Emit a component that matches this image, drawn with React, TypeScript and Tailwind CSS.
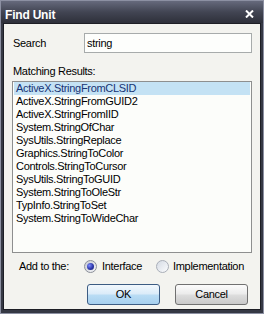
const results = [
  'ActiveX.StringFromCLSID',
  'ActiveX.StringFromGUID2',
  'ActiveX.StringFromIID',
  'System.StringOfChar',
  'SysUtils.StringReplace',
  'Graphics.StringToColor',
  'Controls.StringToCursor',
  'SysUtils.StringToGUID',
  'System.StringToOleStr',
  'TypInfo.StringToSet',
  'System.StringToWideChar',
];

function Radio({ checked }: { checked: boolean }) {
  return (
    <span
      className={`flex h-[13px] w-[13px] items-center justify-center rounded-full border ${
        checked
          ? 'border-[#8b8f99] bg-gradient-to-br from-[#c9ccd4] to-[#f4f5f8]'
          : 'border-[#a9aeb8] bg-gradient-to-br from-[#d5dbe4] to-[#fbfcfd]'
      }`}
    >
      {checked && (
        <span className="h-[7px] w-[7px] rounded-full bg-[radial-gradient(circle_at_35%_35%,#7d8bff_0%,#2c36a8_55%,#1a2070_100%)]" />
      )}
    </span>
  );
}

export default function App() {
  return (
    <div
      className="flex h-[314px] w-[264px] flex-col border border-[#8c90a2] bg-[#353844] text-[11px] leading-[13px] tracking-[-0.3px] text-black"
      style={{ fontFamily: '"Liberation Sans", Arial, sans-serif' }}
    >
      {/* Title bar */}
      <div className="flex h-[22px] shrink-0 items-start justify-between bg-gradient-to-b from-[#666a7c] via-[#424553] to-[#2e303a] pl-[4px] pr-[9px] pt-[7px]">
        <span className="text-[12px] font-bold leading-[14px] tracking-[-0.2px] text-white">Find Unit</span>
        <svg width="9" height="8" viewBox="0 0 9 8" className="mt-[2px]">
          <path d="M1 0.5 L8 7.5 M8 0.5 L1 7.5" stroke="#ffffff" strokeWidth="2" />
        </svg>
      </div>

      {/* Client area */}
      <div className="mx-[2px] mb-[3px] flex flex-1 flex-col border border-[#1d1e25] bg-[#f3f3ef] px-[8px] pb-[4px] pt-[9px]">
        <div className="flex h-[20px] items-center">
          <span className="w-[72px] pl-[1px]">Search</span>
          <div className="flex h-[20px] flex-1 items-center border border-[#a7abab] bg-[#fdfefc] px-[2px]">
            string
          </div>
        </div>

        <div className="mt-[12px] pl-[1px]">Matching Results:</div>

        <div className="mt-[3px] h-[172px] border border-[#8e8f8f] bg-[#fcfdfa] px-[1px]">
          {results.map((r, i) => (
            <div
              key={r}
              className={`h-[13px] pl-[2px] ${i === 0 ? 'bg-[#c4e2f4] text-[#173474]' : ''}`}
            >
              {r}
            </div>
          ))}
        </div>

        <div className="mt-[7px] flex h-[13px] items-center">
          <span className="ml-[7px] w-[65px]">Add to the:</span>
          <div className="flex w-[72px] items-center gap-[5px]">
            <Radio checked />
            <span>Interface</span>
          </div>
          <div className="flex items-center gap-[4px]">
            <Radio checked={false} />
            <span>Implementation</span>
          </div>
        </div>

        <div className="mt-[11px] flex justify-end gap-[15px] pr-[4px]">
          <button className="h-[21px] w-[73px] rounded-[3px] border border-[#3c5c83] bg-[linear-gradient(to_bottom,#f2f8fd_0%,#dcecf9_45%,#b9dcf4_55%,#a6cfee_100%)] text-[11px] leading-[13px]">
            OK
          </button>
          <button className="h-[21px] w-[73px] rounded-[3px] border border-[#707070] bg-[linear-gradient(to_bottom,#fbfbfb_0%,#ececec_45%,#dcdcdc_55%,#c9c9c9_100%)] text-[11px] leading-[13px]">
            Cancel
          </button>
        </div>
      </div>
    </div>
  );
}
